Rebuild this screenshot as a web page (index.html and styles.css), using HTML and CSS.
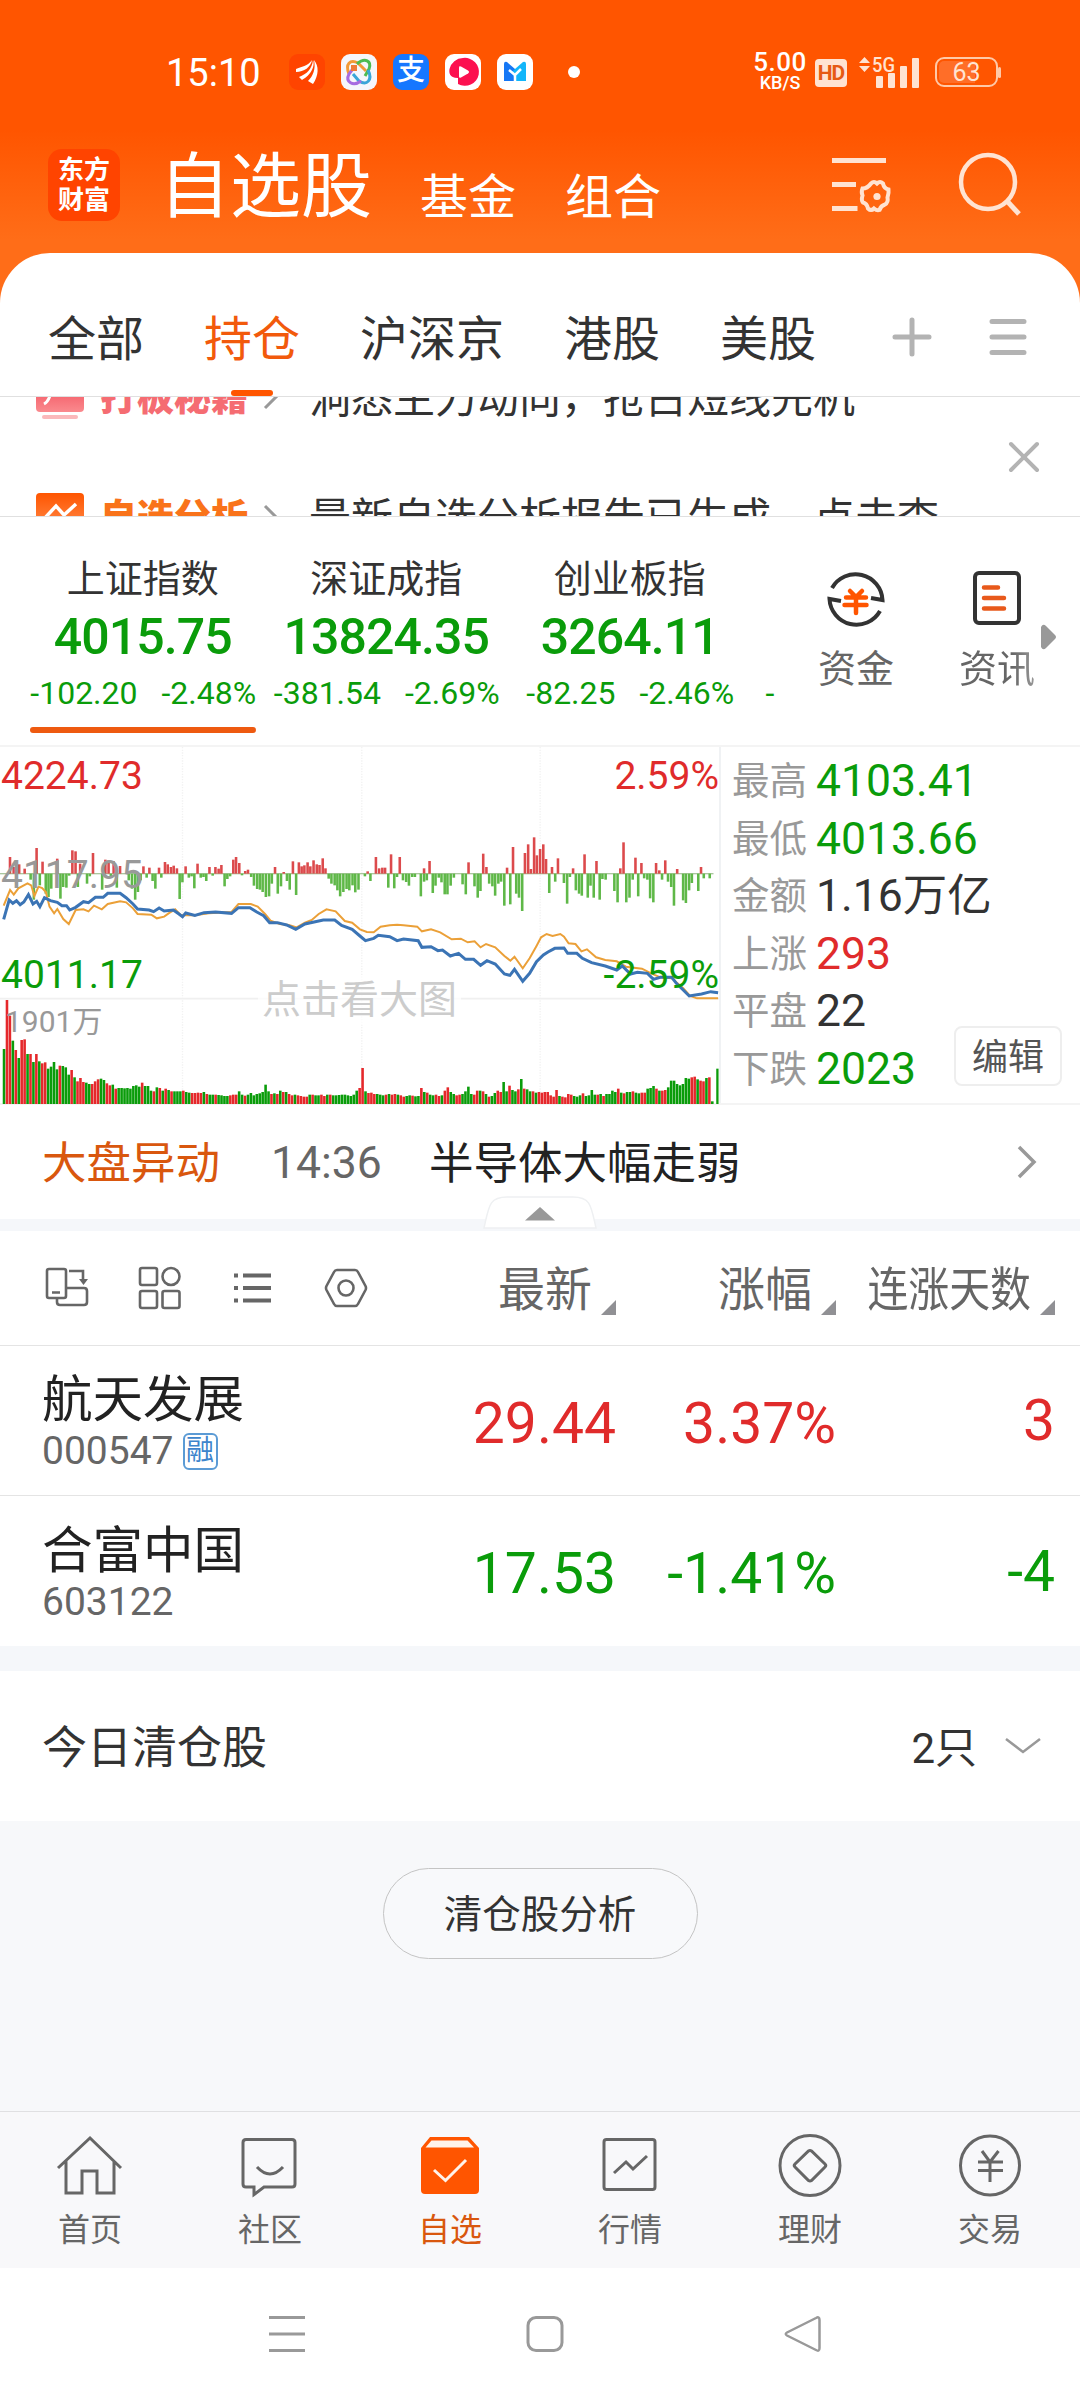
FILE: index.html
```html
<!DOCTYPE html>
<html lang="zh-CN">
<head>
  <meta charset="UTF-8">
  <meta name="viewport" content="width=device-width, initial-scale=1.0">
  <title>自选股</title>
  <link rel="stylesheet" href="styles.css">
</head>
<body>
  <header class="top">
    <!-- 状态栏 -->
    <div class="status">
      <span class="clock">15:10</span>
      <div class="apps">
        <svg class="app" viewBox="0 0 36 36"><rect width="36" height="36" rx="9" fill="#ff4400"/><path d="M7 15C12 13 19 12 23 6C22 13 15 18 7 18zM10 23C18 20 23 15 24 6C27 14 19 23 13 26zM19 27C24 22 27 15 25 6C30 12 30 21 24 30z" fill="#fff"/></svg>
        <svg class="app" viewBox="0 0 36 36"><rect width="36" height="36" rx="9" fill="#f6f6fb"/><g fill="none" stroke-width="3"><path d="M8 20C4 10 9 5 17 9L25 17" stroke="#f29a38"/><path d="M16 10C24 3 31 7 28 15L24 22" stroke="#4dbb52"/><path d="M27 16C32 26 26 32 18 27L12 20" stroke="#3aa5d8"/><path d="M20 27C12 33 4 28 8 20L14 12" stroke="#a76be0"/></g><rect x="10" y="11" width="6" height="6" fill="#f07a3a"/></svg>
        <span class="app alipay">支</span>
        <svg class="app" viewBox="0 0 36 36"><rect width="36" height="36" rx="9" fill="#fff"/><path d="M18 4a14 14 0 1 1-5 26v-6C4 24 4 18 4.500 15A14 14 0 0 1 18 4z" fill="#fc1050"/><path d="M14 13.500q0-2 2-1l7 4q2 1.500 0 3l-7 4q-2 1-2-1z" fill="#fff"/></svg>
        <svg class="app" viewBox="0 0 36 36"><rect width="36" height="36" rx="9" fill="#fff"/><path d="M7 10q0-3 3-2l8 7v12H7z" fill="#1677f5"/><path d="M29 10q0-3-3-2l-8 7-3 3 3 9h11z" fill="#12b6fa"/><path d="M12 16l6 5 6-6M18 21v7" fill="none" stroke="#fff" stroke-width="2.500"/></svg>
      </div>
      <i class="dot"></i>
      <div class="speed"><b>5.00</b><span>KB/S</span></div>
      <span class="hd">HD</span>
      <svg class="signal" viewBox="0 0 62 34"><path d="M0 7L5.500 1L11 7zM0 10H11L5.500 16z" fill="#ffe3d2"/><text x="13" y="16" textLength="23" lengthAdjust="spacingAndGlyphs">5G</text><g fill="#ffe3d2"><rect x="17" y="20" width="7" height="12" rx="1"/><rect x="29" y="17" width="7" height="15" rx="1"/><rect x="41" y="10" width="7" height="22" rx="1"/><rect x="53" y="2" width="7" height="30" rx="1"/></g></svg>
      <span class="battery">63</span>
    </div>

    <div class="titlebar">
      <div class="logo">东方<br>财富</div>
      <h1>自选股</h1>
      <span class="sub">基金</span>
      <span class="sub">组合</span>
      <svg class="filter" viewBox="0 0 66 60"><path d="M0 4.500H54M0 28.500H24M0 52.500H25.500" stroke-width="5"/><path d="M39 26.500q3-3 6 0q3-3 6 0q1 5 5.500 6q.5 3-1 8q1 5-2.500 7q-4 1-5.500 5.500q-2.500 1-5.500-1.500q-3 3-6 0q-1-5-5-6q-2-2-.5-7q-1.500-3 0-7q5 0 8.500-5z" transform="translate(0,1)" stroke-width="4"/><circle cx="45" cy="40.500" r="3.600" fill="#ffe3d2" stroke="none"/></svg>
      <svg class="search" viewBox="0 0 64 66"><circle cx="29" cy="30" r="27" stroke-width="4.500"/><path d="M48 49L60 62" stroke-width="5"/></svg>
    </div>
  </header>

  <main class="card">
    <nav class="tabs">
      <span>全部</span>
      <span class="on">持仓</span>
      <span>沪深京</span>
      <span>港股</span>
      <span>美股</span>
      <svg class="plus" viewBox="0 0 40 40"><path d="M3 20H37M20 3V37"/></svg>
      <svg class="burger" viewBox="0 0 40 40"><path d="M4 4.500H36M4 20H36M4 35.500H36"/></svg>
    </nav>

    <!-- 滚动公告 -->
    <section class="ticker">
      <div class="tick pink">
        <svg viewBox="0 0 48 48"><defs><linearGradient id="gp" x2="0" y2="1"><stop stop-color="#f03a4a"/><stop offset="1" stop-color="#fa8a8e"/></linearGradient></defs><rect y="0" width="48" height="39" rx="4" fill="url(#gp)"/><path d="M8 31Q14 28 16 14" fill="none" stroke="#fff" stroke-width="3"/><rect x="6" y="42" width="36" height="4" rx="2" fill="#fbb9bb"/></svg>
        <b>打板秘籍</b>
        <svg class="arr" viewBox="0 0 14 24"><path d="M1 1L12 12L1 23"/></svg>
        <span>洞悉主力动向，抢占短线先机</span>
      </div>
      <div class="tick orange">
        <svg viewBox="0 0 48 48"><defs><linearGradient id="go" x2="0" y2="1"><stop stop-color="#ff5500"/><stop offset="1" stop-color="#ff9a60"/></linearGradient></defs><rect width="48" height="48" rx="4" fill="url(#go)"/><path d="M8 26L20 13L28 22L40 11" fill="none" stroke="#fff" stroke-width="3.500"/></svg>
        <b>自选分析</b>
        <svg class="arr" viewBox="0 0 14 24"><path d="M1 1L12 12L1 23"/></svg>
        <span>最新自选分析报告已生成，点击查</span>
      </div>
      <svg class="close" viewBox="0 0 32 32"><path d="M3 3L29 29M29 3L3 29"/></svg>
    </section>

    <!-- 指数 -->
    <section class="indices">
      <div class="index active"><h3>上证指数</h3><strong>4015.75</strong><p><span>-102.20</span><span>-2.48%</span></p></div>
      <div class="index"><h3>深证成指</h3><strong>13824.35</strong><p><span>-381.54</span><span>-2.69%</span></p></div>
      <div class="index"><h3>创业板指</h3><strong>3264.11</strong><p><span>-82.25</span><span>-2.46%</span></p></div>
      <span class="cut">-</span>
      <div class="entry">
        <svg viewBox="0 0 62 62"><g fill="none" stroke="#333" stroke-width="4"><path d="M7 20A27 27 0 0 1 57.500 32L46 30"/><path d="M55 43A27 27 0 0 1 4.500 31L16 33"/></g><path d="M25 23l6 6 6-6M21 29.500H41M19.500 37H41.500M31 29V45" fill="none" stroke="#ff5500" stroke-width="4.500" stroke-linecap="round"/></svg>
        <span>资金</span>
      </div>
      <div class="entry last">
        <svg viewBox="0 0 62 62"><rect x="9" y="5" width="44" height="50" rx="4" fill="none" stroke="#333" stroke-width="4"/><path d="M18 19.500H32M18 30H38M18 40.500H38" stroke="#e8591b" stroke-width="4.500" stroke-linecap="round"/></svg>
        <span>资讯</span>
      </div>
      <svg class="more" viewBox="0 0 16 26"><path d="M0 3Q2-1 5 2L14 11Q16 13 14 15L5 24Q2 27 0 23z" fill="#999"/></svg>
    </section>

    <!-- 分时图 -->
    <section class="market">
      <div class="chart">
        <svg id="chart" viewBox="0 21 1568 1071" preserveAspectRatio="none"></svg>
        <span class="lbl hi red">4224.73</span>
        <span class="lbl hi right red">2.59%</span>
        <span class="lbl mid">4117.95</span>
        <span class="lbl lo green">4011.17</span>
        <span class="lbl lo right green">-2.59%</span>
        <span class="vol">1901万</span>
        <span class="zoom">点击看大图</span>
      </div>
      <dl class="stats">
        <dt>最高</dt><dd class="green">4103.41</dd>
        <dt>最低</dt><dd class="green">4013.66</dd>
        <dt>金额</dt><dd>1.16万亿</dd>
        <dt>上涨</dt><dd class="red">293</dd>
        <dt>平盘</dt><dd>22</dd>
        <dt>下跌</dt><dd class="green">2023</dd>
      </dl>
      <button class="edit">编辑</button>
    </section>

    <section class="alert">
      <b>大盘异动</b>
      <time>14:36</time>
      <span>半导体大幅走弱</span>
      <svg viewBox="0 0 20 34"><path d="M2 2L17 17L2 32"/></svg>
    </section>
    <div class="band">
      <svg viewBox="0 0 114 34"><path d="M1 32C6 10 6 1 24 1H90C108 1 108 10 113 32z" fill="#fff" stroke="#eef0f2" stroke-width="1.500"/><path d="M42 24.500L57 11L72 24.500z" fill="#999"/></svg>
    </div>

    <!-- 持仓列表 -->
    <section class="table">
      <div class="thead">
        <div class="tools">
          <svg viewBox="0 0 44 44"><rect x="2" y="3" width="19" height="29" rx="2"/><path d="M7 26.500H15M24 5H38V14M12 33V36q0 3 3 3H39q3 0 3-3V25q0-3-3-3H22"/><path d="M34 13H43L38.500 19z" fill="#666" stroke="none"/></svg>
          <svg viewBox="0 0 44 44"><rect x="2" y="2" width="17" height="17" rx="2"/><circle cx="33" cy="10.500" r="8.500"/><rect x="2" y="25" width="17" height="17" rx="2"/><rect x="24.500" y="25" width="17" height="17" rx="2"/></svg>
          <svg viewBox="0 0 44 44"><path d="M12 9.500H40M12 22H40M12 34.500H40" stroke-width="4"/><path d="M3 9.500H7M3 22H7M3 34.500H7" stroke-width="4"/></svg>
          <svg viewBox="0 0 44 44"><path d="M13 4H31q2 0 3 2L41.500 20q1 2 0 4L34 38q-1 2-3 2H13q-2 0-3-2L2.500 24q-1-2 0-4L10 6q1-2 3-2z"/><circle cx="22" cy="22" r="7.500"/></svg>
        </div>
        <span class="th c1"><em>最新</em></span>
        <span class="th c2"><em>涨幅</em></span>
        <span class="th c3"><em>连涨天数</em></span>
      </div>
      <div class="row red">
        <div class="stock"><h4>航天发展</h4><p>000547<i>融</i></p></div>
        <span class="c1">29.44</span><span class="c2">3.37%</span><span class="c3">3</span>
      </div>
      <div class="row green">
        <div class="stock"><h4>合富中国</h4><p>603122</p></div>
        <span class="c1">17.53</span><span class="c2">-1.41%</span><span class="c3">-4</span>
      </div>
    </section>

    <section class="cleared">
      <span>今日清仓股</span>
      <span class="count">2只</span>
      <svg viewBox="0 0 36 18"><path d="M1 2L18 15L35 2"/></svg>
    </section>
    <div class="rest"><button class="pill">清仓股分析</button></div>
  </main>

  <nav class="bottom">
    <a><svg viewBox="0 0 72 72"><path d="M4 39L36 9L67 39M12 32V64H28V42H43V64H60V32"/></svg>首页</a>
    <a><svg viewBox="0 0 72 72"><path d="M12 10.500H58q3 0 3 3V55q0 3-3 3H30L20 65.500V58H12q-3 0-3-3V13.500q0-3 3-3z"/><path d="M23 38Q36 52 49 38"/></svg>社区</a>
    <a class="on"><svg viewBox="0 0 72 72"><path d="M16 8H55L65 19V61q0 4-4 4H11q-4 0-4-4V19z" fill="#ff5500" stroke="none"/><path d="M17.500 11.500H53.500L60 18.500H11.500z" fill="#fff3ea" stroke="none"/><path d="M20 41L31.500 51.500L52 31" stroke="#fff3ea"/></svg>自选</a>
    <a><svg viewBox="0 0 72 72"><rect x="10" y="10.500" width="51" height="50" rx="2.500"/><path d="M20 44L32 33L39 40L53 27"/></svg>行情</a>
    <a><svg viewBox="0 0 72 72"><circle cx="36" cy="36.500" r="30"/><path d="M34.500 22q1.500-1 3 0L51 35q1.500 1.500 0 3L37.500 51.500q-1.500 1-3 0L21 38q-1.500-1.500 0-3z"/></svg>理财</a>
    <a><svg viewBox="0 0 72 72"><circle cx="36" cy="36.500" r="29.500"/><path d="M28 22L36 33L44.500 22M24 33H49M24 41.500H49M36 33V53"/></svg>交易</a>
  </nav>

  <!-- 系统导航 -->
  <footer class="sysnav">
    <svg viewBox="0 0 40 40"><path d="M2 3.500H38M2 20H38M2 36.500H38"/></svg>
    <svg viewBox="0 0 40 40"><rect x="3" y="3.500" width="34" height="33" rx="8"/></svg>
    <svg viewBox="0 0 40 40"><path d="M33 4Q36.500 2 36.500 6V34Q36.500 38 33 36L4 21.500Q1.500 20 4 18.500z" stroke-width="2.500"/></svg>
  </footer>

  <script src="chart.js"></script>
</body>
</html>
```

FILE: styles.css
```css
* { box-sizing: border-box; margin: 0; padding: 0; }
body {
  width: 1080px; height: 2400px; overflow: hidden;
  display: flex; flex-direction: column;
  background: #fff; color: #333;
  font-family: Roboto, "Noto Sans CJK SC", sans-serif;
}
svg { display: block; flex: none; fill: none; overflow: visible; }
button { font-family: inherit; background: #fff; }
h1, h3, h4, b { font-weight: 400; }
i, em { font-style: normal; }
.red { color: #e02b2b; }
.green { color: #0a9c0a; }

/* 顶部 */
.top { height: 303px; background: linear-gradient(#ff5500 0, #ff5500 130px, #ff6d18 240px, #ff6d18 100%); color: #fff; }
.status { height: 144px; padding-left: 166px; display: flex; align-items: center; }
.clock { width: 123px; font-size: 38px; padding-top: 2px; }
.apps { display: flex; gap: 16px; }
.app { width: 36px; height: 36px; border-radius: 9px; }
.alipay { background: #1677ff; font-size: 28px; line-height: 34px; text-align: center; font-weight: 500; }
.dot { width: 12px; height: 12px; border-radius: 6px; background: #fff; margin-left: 35px; }
.speed { margin-left: 171px; width: 58px; text-align: center; }
.speed b { display: block; font-size: 26px; font-weight: 500; line-height: 21px; letter-spacing: .5px; }
.speed span { display: block; font-size: 18px; font-weight: 500; line-height: 18px; padding-top: 1px; }
.hd { margin-left: 6px; margin-top: 2px; width: 32px; height: 28px; border-radius: 4px; background: #ffe3d2; color: #e65a14; font-size: 21px; font-weight: 700; line-height: 29px; text-align: center; letter-spacing: -1px; }
.signal { width: 62px; height: 34px; margin-left: 12px; margin-top: 1px; }
.signal text { font-size: 20px; font-weight: 500; fill: #ffe3d2; }
.battery { position: relative; margin-left: 14px; width: 63px; height: 30px; border: 2px solid #ffc9a8; border-radius: 9px; color: #ffe3d2; font-size: 25px; line-height: 28px; text-align: center; background: linear-gradient(90deg, #ff6e28 36px, transparent 36px) content-box; padding: 2px; line-height: 24px; }
.battery::after { content: ""; position: absolute; left: 61px; top: 8px; width: 3px; height: 11px; border-radius: 2px; background: #ffc9a8; }
.titlebar { height: 109px; padding: 0 57px 0 48px; display: flex; align-items: flex-start; }
.logo { width: 72px; height: 72px; margin-top: 5px; border-radius: 14px; background: #ff4400; font-size: 26px; font-weight: 700; line-height: 30px; text-align: center; padding-top: 6px; }
.titlebar h1 { width: 261px; margin-left: 39px; font-size: 71px; line-height: 85px; }
.sub { width: 145px; font-size: 48px; line-height: 108px; }
.filter { width: 66px; height: 60px; margin: 12px 0 0 auto; stroke: #ffe3d2; }
.search { width: 64px; height: 66px; margin: 8px 0 0 61px; stroke: #ffe3d2; }

/* 分类标签 */
.card { height: 1858px; margin-top: -50px; background: #fff; border-radius: 50px 50px 0 0; }
.tabs { height: 144px; padding: 29px 0 0 48px; display: flex; border-bottom: 1px solid #e0e0e0; font-size: 48px; line-height: 116px; }
.tabs span { margin-right: 60px; position: relative; height: 114px; }
.tabs .on { color: #f25a0c; }
.tabs .on::after { content: ""; position: absolute; left: 27px; bottom: 0; width: 42px; height: 6px; border-radius: 3px; background: #ff5500; }
.plus, .burger { width: 40px; height: 40px; margin-top: 35px; stroke: #b3b3b3; stroke-width: 5; stroke-linecap: round; }
.plus { margin-left: 16px; }
.burger { margin-left: 56px; }

/* 公告 */
.ticker { position: relative; height: 120px; overflow: hidden; border-bottom: 1px solid #e0e0e0; }
.tick { height: 120px; margin-top: -60px; padding-left: 36px; display: flex; align-items: center; }
.tick + .tick { margin-top: 0; }
.tick svg { width: 48px; height: 48px; }
.tick b { width: 149px; margin-left: 16px; padding-bottom: 4px; font-size: 37px; font-weight: 900; white-space: nowrap; }
.tick .arr { width: 14px; height: 24px; margin-left: 15px; stroke: #999; stroke-width: 3; }
.tick span { margin-left: 31px; padding-bottom: 5px; font-size: 42px; white-space: nowrap; }
.pink b { color: #f56c72; }
.orange b { color: #f9731a; }
.close { position: absolute; left: 1008px; top: 44px; width: 32px; height: 32px; stroke: #b3b3b3; stroke-width: 4; stroke-linecap: round; }

/* 指数 */
.indices { position: relative; height: 230px; padding-left: 21px; display: flex; border-bottom: 2px solid #f4f4f4; }
.index { width: 243.5px; padding-top: 37px; text-align: center; position: relative; color: #0a9c0a; }
.index h3 { font-size: 38px; line-height: 50px; color: #333; }
.index strong { display: block; font-size: 50px; font-weight: 500; line-height: 66px; letter-spacing: -.9px; }
.index p { display: flex; justify-content: center; gap: 24px; padding-left: 1px; font-size: 32px; line-height: 46px; }
.index.active::after { content: ""; position: absolute; left: 9px; bottom: 12px; width: 226px; height: 6px; border-radius: 3px; background: #ee5a10; }
.cut { color: #0a9c0a; font-size: 32px; line-height: 46px; margin-top: 153px; width: 30px; padding-left: 14px; }
.entry { width: 141px; padding-top: 51px; color: #666; font-size: 38px; line-height: 50px; display: flex; flex-direction: column; align-items: center; gap: 14px; margin-left: 4px; }
.entry svg { width: 62px; height: 62px; }
.entry.last { margin-left: 0; }
.entry.last span { background: linear-gradient(90deg, #666 70%, #999); -webkit-background-clip: text; color: transparent; }
.more { position: absolute; left: 1041px; top: 107px; width: 16px; height: 26px; }

/* 行情 */
.market { position: relative; height: 358px; display: flex; border-bottom: 2px solid #f4f4f4; }
.chart { position: relative; width: 721px; border-right: 2px solid #f0f2f4; }
.chart svg { width: 719px; height: 357px; }
.lbl { position: absolute; left: 1px; font-size: 39px; line-height: 40px; }
.lbl.right { left: auto; right: 0; }
.hi { top: 9px; }
.mid { top: 108px; color: #999; }
.lo { top: 208px; }
.vol { position: absolute; left: 5px; top: 255px; font-size: 30px; line-height: 40px; color: #999; }
.zoom { position: absolute; left: 258px; top: 228px; width: 203px; background: rgba(255,255,255,.7); font-size: 39px; line-height: 50px; text-align: center; color: #ccc; }
.stats { padding: 6px 0 0 11px; display: grid; grid-template-columns: 84px 1fr; grid-auto-rows: 57.500px; line-height: 57.500px; }
.stats dt { font-size: 37.500px; color: #999; }
.stats dd { font-size: 44.500px; white-space: nowrap; }
.edit { position: absolute; right: 18px; bottom: 17px; width: 108px; height: 60px; padding-top: 3px; border: 2px solid #eee; border-radius: 8px; font-size: 36px; line-height: 54px; color: #555; }

.alert { height: 114px; padding: 0 43px 0 42px; display: flex; align-items: center; font-size: 44.500px; color: #222; }
.alert b { color: #d9570e; width: 229px; padding-bottom: 5px; }
.alert time { color: #666; width: 158px; padding-top: 2px; }
.alert span { padding-bottom: 5px; }
.alert svg { width: 20px; height: 34px; margin-left: auto; stroke: #999; stroke-width: 3.500; }
.band { position: relative; height: 12px; background: #f5f7fa; }
.band svg { position: absolute; left: 483px; top: -23px; width: 114px; height: 34px; }

/* 列表 */
.thead { height: 115px; display: grid; grid-template-columns: 396px 220px 220px 219px; align-items: center; border-bottom: 1px solid #e4e4e4; font-size: 47px; color: #666; }
.tools { display: flex; gap: 49px; padding-left: 45px; }
.tools svg { width: 44px; height: 44px; stroke: #666; stroke-width: 2.600; }
.th { position: relative; text-align: right; padding: 0 24px 6px 0; white-space: nowrap; }
.th::after { content: ""; position: absolute; right: 0; bottom: 11px; border-left: 15px solid transparent; border-bottom: 15px solid #909094; }
.th em { display: inline-block; }
.c3 em { transform: scaleX(.87); transform-origin: right; }
.row { height: 150px; display: grid; grid-template-columns: 396px 220px 220px 219px; align-items: center; border-bottom: 1px solid #e4e4e4; font-size: 57px; text-align: right; }
.row:last-child { border-bottom: 0; }
.row .c1, .row .c2 { padding-top: 5px; }
.stock { padding: 3px 0 0 42px; text-align: left; color: #222; }
.stock h4 { font-size: 50.500px; line-height: 58px; }
.stock p { display: flex; align-items: center; gap: 9px; font-size: 39px; line-height: 44px; color: #666; }
.stock i { width: 35px; height: 37px; border: 2px solid #5b9bd5; border-radius: 6px; font-size: 28px; line-height: 32px; text-align: center; color: #3d85cc; }

.cleared { height: 175px; border-top: 25px solid #f5f7fa; padding: 0 39px 0 42px; display: flex; align-items: center; font-size: 45px; }
.cleared span { padding-bottom: 4px; }
.count { margin-left: auto; font-size: 42px; }
.cleared svg { width: 36px; height: 18px; margin-left: 28px; stroke: #999; stroke-width: 2.500; }
.rest { height: 291px; padding-top: 47px; background: #f7f8fa; text-align: center; }
.pill { width: 315px; height: 91px; padding-top: 2px; border: 1px solid #c4c4c4; border-radius: 46px; background: #f8f9fb; font-size: 38.500px; line-height: 84px; color: #333; }

/* 底部导航 */
.bottom { height: 157px; background: #f8f8fa; border-top: 1px solid #e0e0e2; display: flex; }
.bottom a { flex: 1; padding-top: 17px; display: flex; flex-direction: column; align-items: center; gap: 5px; font-size: 32px; line-height: 48px; color: #666; }
.bottom svg { width: 72px; height: 72px; stroke: #666; stroke-width: 3; }
.bottom .on { color: #d9570e; }
.sysnav { height: 132px; padding: 46px 0 0 267px; display: flex; gap: 218px; }
.sysnav svg { width: 40px; height: 40px; stroke: #999; stroke-width: 3; }
```

FILE: chart.js
```js
// 分时图数据：价格线、均价线、多空柱、成交量
const price = "8,538 20,480 28,490 36,482 44,494 52,486 62,464 72,492 80,484 87,500 97,473 110,482 125,487 135,497 145,497 152,510 165,502 182,485 193,488 208,472 225,472 235,460 262,460 275,473 290,492 300,507 325,510 335,515 347,504 358,513 378,510 388,520 398,530 405,519 425,526 445,518 470,516 505,520 520,503 545,503 560,516 575,527 588,548 605,548 625,555 645,568 665,552 685,546 705,540 730,540 745,556 768,568 785,588 797,602 815,595 825,586 850,590 866,602 880,597 912,602 920,622 940,620 955,632 965,630 982,648 1000,640 1015,658 1033,658 1048,676 1062,662 1080,672 1100,702 1112,706 1122,688 1140,724 1155,700 1170,665 1185,645 1195,636 1210,625 1230,624 1238,640 1258,640 1270,655 1290,668 1320,678 1345,690 1357,678 1375,702 1390,697 1412,700 1425,718 1440,712 1465,712 1475,730 1490,750 1503,768 1530,762 1550,755 1566,758";
const average = "8,497 22,450 30,464 40,445 60,430 68,436 75,468 84,440 92,444 100,456 108,500 118,520 125,507 138,537 150,552 165,510 182,508 193,514 205,497 222,508 235,492 262,484 275,487 290,505 300,522 330,524 342,535 358,530 370,518 382,508 395,526 425,526 455,520 505,516 520,492 547,492 562,500 578,522 590,542 610,552 630,555 647,562 665,548 680,540 695,522 712,508 732,514 752,543 768,548 785,568 800,576 815,577 830,560 850,556 866,554 880,556 910,560 920,574 940,568 960,577 985,598 1005,596 1020,607 1035,604 1048,622 1060,612 1080,622 1100,648 1113,662 1122,650 1140,685 1155,655 1170,618 1180,592 1192,582 1205,588 1222,582 1230,590 1240,610 1255,612 1268,634 1280,628 1300,652 1320,660 1345,664 1365,680 1400,686 1420,700 1440,712 1465,715 1490,745 1505,768 1520,775 1566,775";

const up = [[22,50],[30,20],[42,28],[54,15],[80,77],[93,36],[125,45],[158,70],[165,67],[175,30],[203,62],[230,42],[237,40],[248,37],[262,23],[313,22],[326,18],[347,18],[360,35],[366,28],[373,20],[379,24],[386,16],[405,22],[431,30],[457,20],[470,20],[477,15],[483,26],[509,42],[515,50],[522,32],[535,8],[541,12],[600,20],[619,5],[639,37],[652,34],[658,22],[664,25],[671,34],[677,22],[684,40],[691,28],[697,26],[704,46],[710,16],[802,7],[820,50],[827,16],[834,18],[840,18],[853,58],[872,50],[925,16],[937,38],[1022,34],[1054,60],[1061,20],[1106,18],[1119,80],[1145,62],[1152,88],[1158,14],[1165,109],[1171,55],[1178,74],[1185,88],[1191,44],[1204,20],[1217,46],[1250,16],[1275,58],[1301,38],[1353,16],[1360,94],[1386,48],[1399,32],[1431,32],[1438,10],[1451,40],[1477,14],[1529,20]];
const down = [[67,18],[74,78],[87,35],[100,60],[106,70],[112,45],[132,75],[138,40],[145,42],[151,6],[170,40],[190,30],[196,8],[223,48],[242,10],[255,42],[281,20],[288,45],[295,78],[301,55],[307,20],[320,12],[333,22],[339,45],[352,12],[392,76],[398,26],[412,12],[418,8],[424,44],[438,12],[444,10],[450,22],[464,6],[490,38],[496,16],[502,8],[528,5],[548,10],[554,36],[561,46],[567,48],[573,55],[580,70],[587,68],[593,30],[606,60],[613,38],[626,22],[632,48],[646,64],[717,15],[723,30],[730,35],[736,50],[742,68],[749,55],[756,46],[762,50],[769,35],[775,56],[782,48],[796,8],[808,22],[847,42],[860,44],[866,10],[879,20],[886,25],[892,36],[899,10],[905,10],[918,68],[925,24],[931,20],[944,58],[950,36],[957,12],[963,26],[970,62],[976,62],[983,36],[990,12],[1009,32],[1016,62],[1035,38],[1042,72],[1048,52],[1067,30],[1074,38],[1080,66],[1087,30],[1093,24],[1100,96],[1113,92],[1126,60],[1132,72],[1139,112],[1198,58],[1211,24],[1230,28],[1237,90],[1243,10],[1256,50],[1263,60],[1269,66],[1282,72],[1288,36],[1295,72],[1308,78],[1314,16],[1321,18],[1340,52],[1347,86],[1366,86],[1373,72],[1380,18],[1392,68],[1405,14],[1412,18],[1418,74],[1425,86],[1444,18],[1457,24],[1464,40],[1470,96],[1490,80],[1496,88],[1503,50],[1509,28],[1523,52],[1535,14],[1548,14]];

const volume = [165,312,265,190,162,138,192,194,150,150,126,150,128,122,125,106,112,126,104,115,114,110,88,102,80,68,78,66,64,60,60,68,74,76,72,62,56,58,46,48,48,47,48,46,54,56,52,64,54,54,40,38,50,48,40,46,42,38,38,38,38,40,36,34,33,33,34,33,36,30,28,28,28,27,26,24,24,26,28,28,38,28,25,28,33,26,30,32,36,58,38,30,32,30,40,36,36,30,26,28,26,24,22,22,28,28,26,26,28,24,28,28,26,26,27,28,28,26,24,28,40,48,108,38,33,34,30,30,28,26,28,30,28,30,28,26,22,24,26,25,23,24,48,36,34,28,26,28,24,26,40,50,36,30,26,28,30,38,52,30,28,40,40,38,30,22,24,33,40,36,66,38,55,42,38,44,75,46,44,38,38,34,36,34,36,36,26,22,42,24,22,20,30,28,24,22,26,32,24,26,42,28,28,30,24,30,30,40,36,46,34,32,36,36,38,34,32,34,34,46,48,54,46,40,40,42,50,70,70,60,56,60,78,76,80,82,74,70,68,78,80,8];
const volColor = "grrgrgrrgrgrgrrggggrgggrgrrrggrrrggrrgrggggggggrgggrgrgrgrgggrggrrrrgrggrggggrrrggrggggggggrgrgrgrrgrrrrgrggrrgrgggggggggrrgrrrgggrgrrgrrggrggrgrggrrgrrggrrggggrrgrgrggrrggrggrgrggrgrrrrrrrgrrrrgggrggggrgrggggrgrggrggrrgggrgrrggggggggrrgrrgr";

const bars = (list, dir, color) => list.map(([x, h]) =>
  `<rect x="${x - 3}" y="${dir > 0 ? 401 - h : 401}" width="5.6" height="${h}" fill="${color}"/>`).join("");

const step = 1551 / volume.length;
const vols = volume.map((h, i) =>
  `<rect x="${6 + i * step}" y="${1092 - h}" width="${step - 0.8}" height="${h}" fill="${volColor[i] === "r" ? "#e5282b" : "#0a9c0a"}"/>`).join("");

document.getElementById("chart").innerHTML = `
  <path d="M398 21V1092M789 21V1092M1178 21V1092" stroke="#f2f2f2" stroke-width="3" stroke-dasharray="4 4"/>
  <path d="M0 776H1568" stroke="#f0f0f0" stroke-width="5"/>
  <path d="M0 401H1556" stroke="#8fb57e" stroke-width="3"/>
  ${bars(up, 1, "#dc4a4c")}${bars(down, -1, "#5fb848")}
  ${vols}<rect x="1562" y="986" width="5" height="106" fill="#0a9c0a"/>
  <polyline points="${average}" stroke="#eba038" stroke-width="2" vector-effect="non-scaling-stroke"/>
  <polyline points="${price}" stroke="#3b74b5" stroke-width="3" vector-effect="non-scaling-stroke"/>`;
```
